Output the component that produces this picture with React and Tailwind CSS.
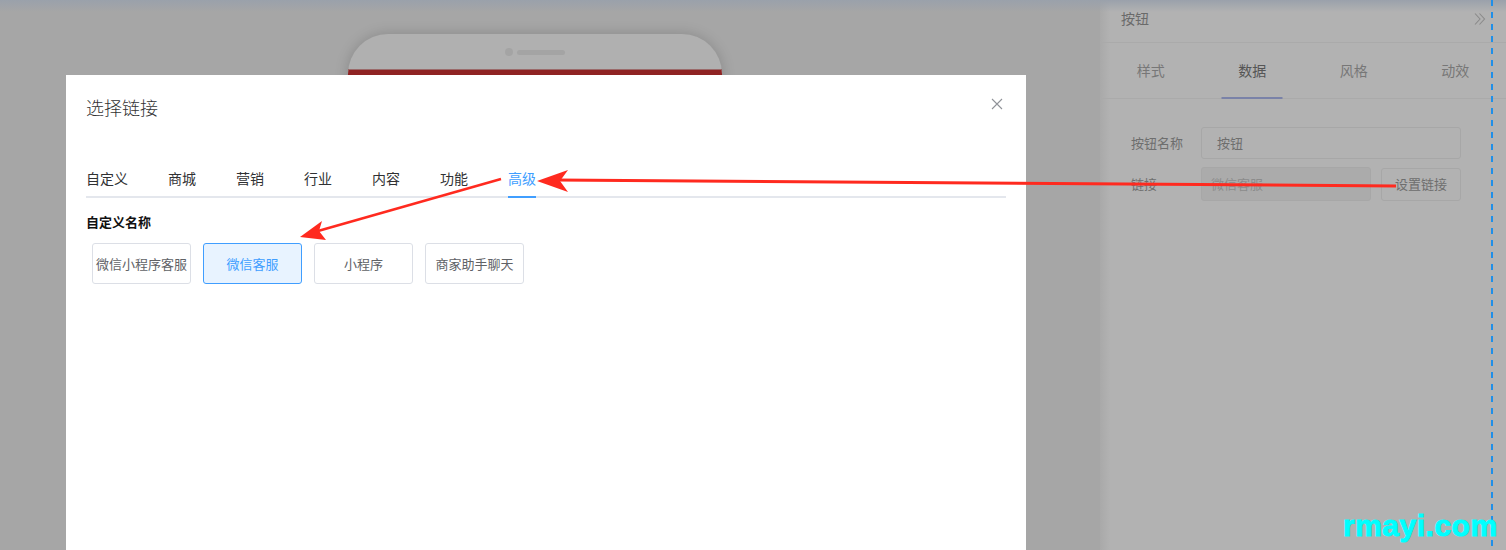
import React from "react";

const font = { fontFamily: '"Noto Sans CJK SC", "Noto Sans", sans-serif' };

function Phone() {
  return (
    <div className="mt-[34px] ml-[348px] w-[374px] h-[600px] rounded-t-[40px] bg-[#b0b0b0] shadow-[0_0_14px_rgba(0,0,0,0.18)] overflow-hidden flex flex-col">
      <div className="h-[35px] flex items-center justify-center gap-[4px] pt-[1px]">
        <div className="w-[8px] h-[8px] rounded-full bg-[#a4a4a4]" />
        <div className="w-[48px] h-[5px] rounded-full bg-[#a4a4a4]" />
      </div>
      <div className="h-[60px] bg-[#8f2323] border-t border-[#9a6a6a]" />
    </div>
  );
}

function RightPanel() {
  return (
    <div className="w-[406px] h-full bg-[#b2b2b2] flex flex-col relative" style={font}>
      <div className="absolute left-0 top-0 bottom-0 w-[10px] bg-gradient-to-r from-[#a9a9a9] to-[#b2b2b2]" />
      <div className="h-[43px] flex items-start justify-between pt-[7px] pl-[21px] pr-[20px] border-b border-[#aaaaaa] relative">
        <span className="text-[14px] text-[#6a6a6a] leading-[22px]">按钮</span>
        <svg width="12" height="14" viewBox="0 0 12 14" className="mt-[5px]">
          <path d="M1 1.5L6 7L1 12.5M5.5 1.5L10.5 7L5.5 12.5" stroke="#8a8a8a" strokeWidth="1.1" fill="none" />
        </svg>
      </div>
      <div className="h-[56px] grid grid-cols-4 border-b border-[#aaaaaa] relative">
        {["样式", "数据", "风格", "动效"].map((t, i) => (
          <div key={t} className="relative flex items-center justify-center">
            <span className={"text-[14px] " + (i === 1 ? "text-[#555]" : "text-[#777]")}>{t}</span>
            {i === 1 && <div className="absolute bottom-[-1px] left-1/2 -translate-x-1/2 w-[61px] h-[2px] bg-[#7a82a8]" />}
          </div>
        ))}
      </div>
      <div className="pl-[31px] pt-[28px] flex flex-col gap-[8px] relative">
        <div className="flex items-center">
          <span className="w-[70px] text-[13px] text-[#6e6e6e]">按钮名称</span>
          <div className="w-[260px] h-[32px] border border-[#a7a7a7] rounded-[3px] flex items-center pl-[15px] text-[13px] text-[#6e6e6e]">按钮</div>
        </div>
        <div className="flex items-center">
          <span className="w-[70px] text-[13px] text-[#6e6e6e]">链接</span>
          <div className="w-[170px] h-[34px] border border-[#a7a7a7] bg-[#ababab] rounded-[3px] flex items-center pl-[9px] text-[13px] text-[#8c8c8c]">微信客服</div>
          <div className="ml-[10px] w-[80px] h-[33px] border border-[#a7a7a7] rounded-[3px] flex items-center justify-center text-[13px] text-[#6e6e6e]">设置链接</div>
        </div>
      </div>
    </div>
  );
}

function Modal() {
  const tabs = ["自定义", "商城", "营销", "行业", "内容", "功能", "高级"];
  const items = ["微信小程序客服", "微信客服", "小程序", "商家助手聊天"];
  return (
    <div className="absolute left-[66px] top-[75px] w-[960px] h-[520px] bg-white px-[20px]" style={font}>
      <div className="h-[64px] flex items-center justify-between">
        <span className="text-[18px] text-[#333] font-light">选择链接</span>
        <svg width="12" height="12" viewBox="0 0 12 12" className="mr-[3px] -mt-[7px]">
          <path d="M1 1L11 11M11 1L1 11" stroke="#909399" strokeWidth="1.1" />
        </svg>
      </div>
      <div className="mt-[26px] border-b-2 border-[#e4e7ed] flex gap-[40px] h-[33px]">
        {tabs.map((t, i) => (
          <div key={t} className="relative">
            <span className={"text-[14px] leading-[24px] " + (i === 6 ? "text-[#409eff]" : "text-[#303133]")}>{t}</span>
            {i === 6 && <div className="absolute left-0 bottom-[-2px] w-full h-[2px] bg-[#409eff]" />}
          </div>
        ))}
      </div>
      <div className="mt-[14px] text-[13px] font-bold text-[#111] leading-[20px]">自定义名称</div>
      <div className="mt-[11px] ml-[6px] flex gap-[12px]">
        {items.map((t, i) => (
          <div
            key={t}
            className={
              "w-[99px] h-[41px] rounded-[3px] border flex items-center justify-center text-[13px] " +
              (i === 1 ? "border-[#409eff] bg-[#e8f3ff] text-[#409eff]" : "border-[#dcdfe6] text-[#606266]")
            }
          >
            {t}
          </div>
        ))}
      </div>
    </div>
  );
}

function Arrows() {
  return (
    <svg className="absolute left-0 top-0 pointer-events-none" width="1506" height="550">
      <path d="M1396 186 L556 180" stroke="#ff2a1f" strokeWidth="3" fill="none" />
      <path d="M537 181 L568 170 L560 181 L568 192 Z" fill="#ff2a1f" />
      <path d="M501 179 L318 231" stroke="#ff2a1f" strokeWidth="2.5" fill="none" />
      <path d="M300 237 L322 221 L319 231 L326 240 Z" fill="#ff2a1f" />
    </svg>
  );
}

export default function App() {
  return (
    <div className="w-[1506px] h-[550px] relative overflow-hidden bg-[#a6a6a6] flex">
      <div className="w-[1100px] h-full">
        <Phone />
      </div>
      <RightPanel />
      <div className="absolute left-0 top-0 w-full h-[12px] bg-gradient-to-b from-[#9aa1ab] to-transparent" />
      <div className="absolute left-[1491px] top-0 h-full w-[2px] bg-[repeating-linear-gradient(to_bottom,#1f8fe8_0px,#1f8fe8_6px,transparent_6px,transparent_12px)]" />
      <Modal />
      <Arrows />
      <div
        className="absolute left-[1343px] top-[511px] text-[30px] font-black text-[#00ffff] leading-none tracking-[0.5px]"
        style={{ fontFamily: '"Liberation Sans", Arial, sans-serif', WebkitTextStroke: "1px #00ffff" }}
      >
        rmayi.com
      </div>
    </div>
  );
}
